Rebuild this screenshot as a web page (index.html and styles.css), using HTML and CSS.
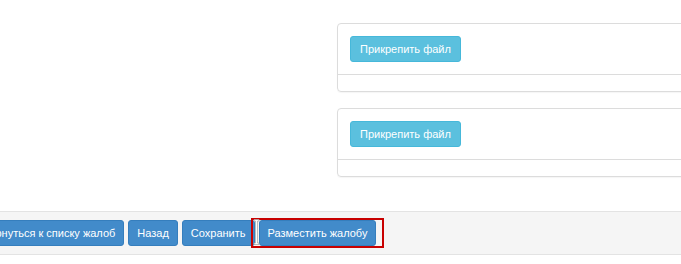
FILE: index.html
```html
<!DOCTYPE html>
<html>
<head>
    <meta charset="utf-8">
    <link rel="stylesheet" href="styles.css">
</head>
<body>
    <div id="content">
        <div class="panel">
            <div class="panelBody">
                <button class="btn btnInfo">Прикрепить файл</button>
            </div>
            <div class="panelFooter"></div>
        </div>
        <div class="panel">
            <div class="panelBody">
                <button class="btn btnInfo">Прикрепить файл</button>
            </div>
            <div class="panelFooter"></div>
        </div>
    </div>
    <div id="actions">
        <button class="btn btnPrimary first">Вернуться к списку жалоб</button>
        <button class="btn btnPrimary">Назад</button>
        <button class="btn btnPrimary">Сохранить</button>
        <span class="marked">
            <button class="btn btnPrimary">Разместить жалобу</button>
            <span class="highlight"></span>
            <svg class="cursor" width="7" height="26" viewBox="0 0 7 26">
                <path d="M1 0.5h5v1.5h-1.5v22h1.5v1.5h-5v-1.5h1.5v-22h-1.5z" fill="#fff" stroke="#a0a0a0" stroke-width="0.7"/>
            </svg>
        </span>
    </div>
</body>
</html>
```
FILE: styles.css
```css
body {
    margin: 0;
    overflow: hidden;
    background-color: #fff;
    font-family: "Liberation Sans", Arial, sans-serif;
}
#content {
    padding: 23px 0 0 337px;
}
.panel {
    width: 400px;
    border: 1px solid #dcdcdc;
    border-radius: 4px;
    margin-bottom: 16px;
    box-shadow: 0 1px 1px rgba(0, 0, 0, 0.04);
}
.panelBody {
    padding: 12px;
    border-bottom: 1px solid #dcdcdc;
}
.panelFooter {
    height: 16px;
}
.btn {
    font-family: "Liberation Sans", Arial, sans-serif;
    font-size: 11px;
    line-height: 16px;
    height: 26px;
    padding: 4px 8px;
    border: 1px solid transparent;
    border-radius: 3px;
    color: #fff;
    cursor: pointer;
    white-space: nowrap;
}
.btnInfo {
    padding: 4px 9px;
    background-color: #5bc0de;
    border-color: #46b8da;
}
.btnPrimary {
    background-color: #428bca;
    border-color: #357ebd;
}
#actions {
    margin-top: 34px;
    display: flex;
    align-items: center;
    gap: 4px;
    padding: 8px 0;
    background-color: #f5f5f5;
    border-top: 1px solid #e3e3e3;
    border-bottom: 1px solid #e3e3e3;
}
.first {
    margin-left: -27px;
}
.marked {
    position: relative;
    display: flex;
}
.highlight {
    position: absolute;
    left: -8px;
    right: -8px;
    top: -2px;
    bottom: -2px;
    border: 2px solid #c80000;
}
.cursor {
    position: absolute;
    left: -6px;
    top: -1px;
}
```
